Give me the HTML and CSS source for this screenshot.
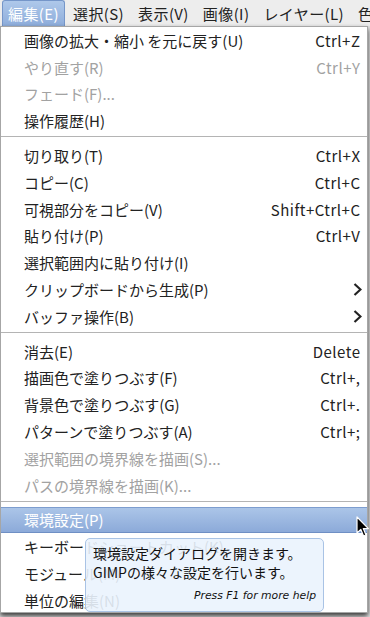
FILE: index.html
```html
<!DOCTYPE html>
<html>
<head>
    <title>GIMP 編集メニュー</title>
    <link rel="stylesheet" href="styles.css">
</head>
<body>
    <div class="menubar">
        <span class="bar-item active">編集(E)</span>
        <span class="bar-item">選択(S)</span>
        <span class="bar-item">表示(V)</span>
        <span class="bar-item">画像(I)</span>
        <span class="bar-item">レイヤー(L)</span>
        <span class="bar-item">色(C)</span>
    </div>

    <div class="menu">
        <div class="item"><span>画像の拡大・縮小 を元に戻す(U)</span><span class="accel">Ctrl+Z</span></div>
        <div class="item disabled"><span>やり直す(R)</span><span class="accel">Ctrl+Y</span></div>
        <div class="item disabled"><span>フェード(F)...</span></div>
        <div class="item"><span>操作履歴(H)</span></div>
        <div class="sep"></div>

        <div class="item"><span>切り取り(T)</span><span class="accel">Ctrl+X</span></div>
        <div class="item"><span>コピー(C)</span><span class="accel">Ctrl+C</span></div>
        <div class="item"><span>可視部分をコピー(V)</span><span class="accel">Shift+Ctrl+C</span></div>
        <div class="item"><span>貼り付け(P)</span><span class="accel">Ctrl+V</span></div>
        <div class="item"><span>選択範囲内に貼り付け(I)</span></div>
        <div class="item"><span>クリップボードから生成(P)</span>
            <svg class="arrow" width="9" height="13" viewBox="0 0 9 13"><path d="M1.5 1 L7.5 6.5 L1.5 12" fill="none" stroke="#222" stroke-width="2.2"/></svg>
        </div>
        <div class="item"><span>バッファ操作(B)</span>
            <svg class="arrow" width="9" height="13" viewBox="0 0 9 13"><path d="M1.5 1 L7.5 6.5 L1.5 12" fill="none" stroke="#222" stroke-width="2.2"/></svg>
        </div>
        <div class="sep"></div>

        <div class="item"><span>消去(E)</span><span class="accel">Delete</span></div>
        <div class="item"><span>描画色で塗りつぶす(F)</span><span class="accel">Ctrl+,</span></div>
        <div class="item"><span>背景色で塗りつぶす(G)</span><span class="accel">Ctrl+.</span></div>
        <div class="item"><span>パターンで塗りつぶす(A)</span><span class="accel">Ctrl+;</span></div>
        <div class="item disabled"><span>選択範囲の境界線を描画(S)...</span></div>
        <div class="item disabled"><span>パスの境界線を描画(K)...</span></div>
        <div class="sep"></div>

        <div class="item selected"><span>環境設定(P)</span></div>
        <div class="item"><span>キーボードショートカット(K)</span></div>
        <div class="item"><span>モジュール(M)</span></div>
        <div class="item"><span>単位の編集(N)</span></div>

        <!-- tooltip for the hovered item -->
        <div class="tooltip">
            <div class="tip-text">環境設定ダイアログを開きます。</div>
            <div class="tip-text">GIMPの様々な設定を行います。</div>
            <div class="tip-help">Press F1 for more help</div>
        </div>

        <svg class="cursor" width="14" height="22" viewBox="0 0 14 22">
            <path d="M1 1 L1 17 L4.8 13.4 L7.6 20 L10 19 L7.3 12.6 L12.4 12.6 Z" fill="#000" stroke="#fff" stroke-width="1.2" stroke-linejoin="round"/>
        </svg>
    </div>
</body>
</html>
```

FILE: styles.css
```css
body {
    margin: 0;
    width: 370px;
    height: 617px;
    overflow: hidden;
    background-color: #e4e4e4;
    font-family: "Noto Sans CJK JP", sans-serif;
    font-size: 15px;
    color: #222;
}

.menubar {
    height: 26px;
    display: flex;
    align-items: stretch;
    gap: 2px;
    padding-left: 2px;
    background-color: #ededed;
    white-space: nowrap;
    overflow: hidden;
}

.bar-item {
    display: flex;
    align-items: center;
    padding: 0 6px;
    line-height: 1;
    letter-spacing: 0.4px;
}

.bar-item.active {
    color: white;
    background: linear-gradient(#aec8ea, #8eaddb);
    border: 1px solid #7596c9;
    border-bottom: none;
    border-radius: 3px 3px 0 0;
    padding: 0 5px;
}

.menu {
    position: relative;
    width: 366px;
    height: 585px;
    background-color: white;
    border: 1px solid #a6a6a6;
    box-shadow: 0 3px 5px rgba(0, 0, 0, 0.75);
}

.item {
    height: 26.8px;
    display: flex;
    align-items: center;
    justify-content: space-between;
    padding: 0 7px 0 23px;
    line-height: 1;
    white-space: nowrap;
}

.accel {
    letter-spacing: 0.5px;
    margin-right: -0.5px;
}

.disabled {
    color: #a2a2a2;
}

.selected {
    color: white;
    background: linear-gradient(#abc5e8, #8caad9);
    border-top: 1px solid #7d9dcf;
    border-bottom: 1px solid #6f8fc4;
    box-sizing: border-box;
}

.arrow {
    margin-right: -2px;
}

.sep {
    height: 8px;
    box-sizing: border-box;
    border-top: 1px solid #b4b4b4;
    margin-top: 2px;
    margin-bottom: -2px;
}

.tooltip {
    position: absolute;
    left: 84px;
    top: 511px;
    width: 239px;
    height: 74px;
    box-sizing: border-box;
    padding: 5px 7px 0 7px;
    background-color: rgba(234, 243, 253, 0.9);
    border: 1px solid #a9c3e5;
    border-radius: 5px;
    color: #111;
    font-size: 14px;
}

.tip-text {
    line-height: 18.5px;
}

.tip-help {
    margin-top: 8px;
    text-align: right;
    font-family: "DejaVu Sans", sans-serif;
    font-style: italic;
    font-size: 10.8px;
}

.cursor {
    position: absolute;
    left: 355px;
    top: 489px;
}
```
